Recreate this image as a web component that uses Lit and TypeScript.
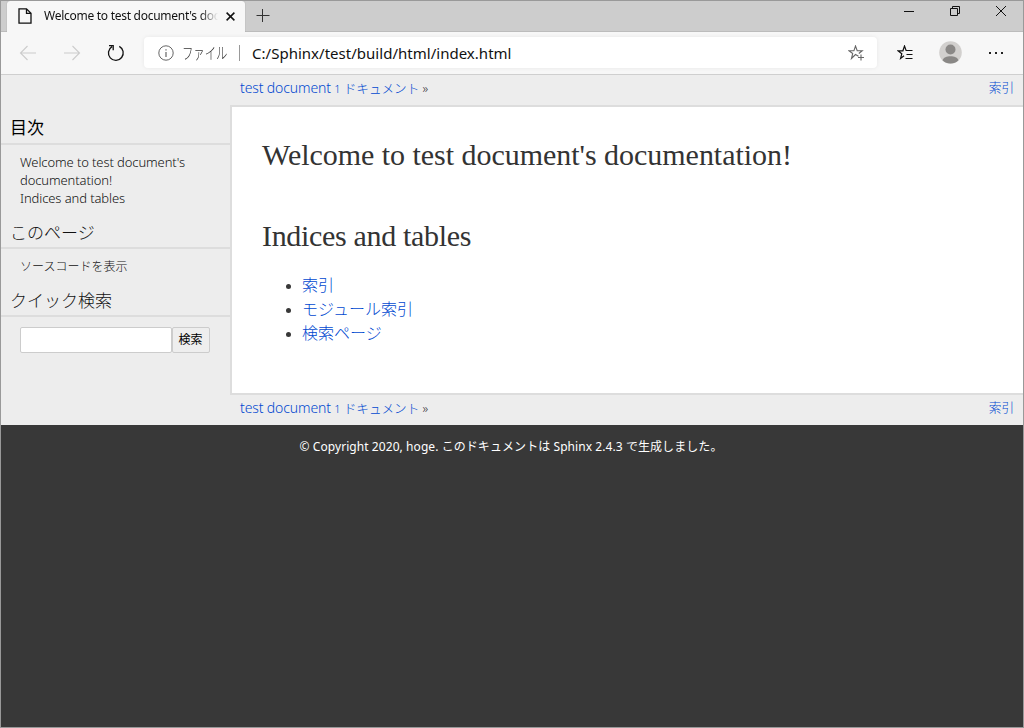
import { LitElement, html, css } from "lit";
import { customElement } from "lit/decorators.js";

@customElement("browser-chrome")
class BrowserChrome extends LitElement {
  static styles = css`
    :host { display: block; font-family: "Noto Sans", "Noto Sans CJK JP", sans-serif; font-weight: 400; }
    svg { display: block; fill: none; stroke: #111; flex: none; }
    .strip { display: flex; height: 30px; background: #cdcdcd; border-bottom: 1px solid #bcbcbc; padding-left: 6px; }
    .tab { display: flex; align-items: center; width: 238px; height: 31px; box-sizing: border-box; background: #f7f7f7; border-radius: 3px 3px 0 0; padding: 0 9px 1px 11px; box-shadow: 0 0 1px #888; clip-path: inset(-1px -2px 0 -2px); }
    .title { width: 174px; margin-left: 12px; overflow: hidden; white-space: nowrap; font-size: 12px; line-height: 18px; letter-spacing: -0.27px; color: #111; -webkit-mask-image: linear-gradient(90deg, #000 156px, transparent 174px); mask-image: linear-gradient(90deg, #000 156px, transparent 174px); }
    .close { margin-left: 8px; }
    .plus { margin: 8px 0 0 11px; }
    .controls { display: flex; margin-left: auto; gap: 35px; padding: 5px 16px 0 0; }
    .tools { display: flex; align-items: center; height: 43px; background: #f7f7f7; border-bottom: 1px solid #cfcfcf; box-sizing: border-box; padding: 0 19px 1px 18px; }
    .tools .fwd { margin-left: 26px; }
    .tools .reload { margin-left: 26px; }
    .field { display: flex; align-items: center; box-sizing: border-box; width: 733px; height: 31px; margin-left: 19px; background: #fff; border-radius: 4px; padding: 0 12px 0 14px; box-shadow: 0 0 4px #0001; white-space: nowrap; }
    .kind { width: 50px; margin-left: 8px; font-size: 16px; line-height: 22px; font-weight: 300; color: #333; }
    .kind span { display: inline-block; transform: scaleX(.71); transform-origin: 0 50%; }
    .bar { width: 1px; height: 16px; background: #999; margin-left: 7px; }
    .url { margin-left: 12px; font-size: 15px; line-height: 22px; letter-spacing: .02px; color: #111; }
    .star { margin-left: auto; }
    .fav { margin-left: 20px; }
    .user { margin-left: 24px; }
    .dots { margin-left: 27px; }
  `;
  render() {
    return html`
      <div class="strip">
        <div class="tab">
          <svg width="14" height="16" viewBox="0 0 14 16" stroke-width="1.3"><path d="M1 .8H8.5L13 5.3V15.2H1ZM8.5 .8V5.3H13" /></svg>
          <div class="title">Welcome to test document's documentation!</div>
          <svg class="close" width="9" height="9" viewBox="0 0 9 9" stroke-width="1.5"><path d="M.6 .6 8.4 8.4M8.4 .6 .6 8.4" /></svg>
        </div>
        <svg class="plus" width="14" height="14" viewBox="0 0 14 14"><path d="M.5 6.5H13.5M6.5 0V13" stroke="#333" /></svg>
        <div class="controls">
          <svg width="11" height="11" viewBox="0 0 11 11"><path d="M0 5.5H10" /></svg>
          <svg width="11" height="11" viewBox="0 0 11 11"><path d="M.5 2.5H7.5V9.5H.5ZM2.5 2.5V.5H9.5V7.5H7.5" /></svg>
          <svg width="11" height="11" viewBox="0 0 11 11"><path d="M0 0 10 10M10 0 0 10" /></svg>
        </div>
      </div>
      <div class="tools">
        <svg width="18" height="16" viewBox="0 0 18 16" stroke-width="1.1"><path d="M17 8H1.5M8.5 1 1.5 8l7 7" stroke="#ccc" /></svg>
        <svg class="fwd" width="18" height="16" viewBox="0 0 18 16" stroke-width="1.1"><path d="M1 8H16.500M9.500 1l7 7-7 7" stroke="#ccc" /></svg>
        <svg class="reload" width="18" height="18" viewBox="0 0 18 18" stroke-width="1.3"><path d="M12.300 2.400A7.400 7.400 0 1 1 5 2.600M2 1.700H6.200V6.200" /></svg>
        <div class="field">
          <svg width="16" height="16" viewBox="0 0 16 16"><g stroke="#666"><circle cx="8" cy="8" r="7.200" /><path d="M8 7V12M8 4.200V5.500" stroke-width="1.200" /></g></svg>
          <div class="kind"><span>ファイル</span></div>
          <div class="bar"></div>
          <div class="url">C:/Sphinx/test/build/html/index.html</div>
          <svg class="star" width="17" height="16" viewBox="0 0 17 16"><path d="M10.500 11.300 7.500 9.500 3.500 13.500 4.700 8.500 1 5.800H5.900L7.500 1 9.200 5.800H14.200L10.800 8.500M13 9.500V15.500M10 12.500H16" stroke="#666" stroke-width="1.100" /></svg>
        </div>
        <svg class="fav" width="18" height="16" viewBox="0 0 18 16" stroke-width="1.200"><path d="M7 10.700 3.600 13.400 4.800 8.700 1 5.800H5.900L7.500 1 9.100 5.500H15.500M9.500 9.500H15.500M8.500 13.500H15.500" /></svg>
        <svg class="user" width="23" height="23" viewBox="0 0 23 23" stroke="none"><circle cx="11.500" cy="11.500" r="11.300" fill="#d2d0ce" stroke="none" /><g fill="#8a8886" stroke="none"><circle cx="11.500" cy="8.500" r="5" /><path d="M3.500 19.300C5 13.800 18 13.800 19.500 19.300A11.300 11.300 0 0 1 3.500 19.300Z" /></g></svg>
        <svg class="dots" width="15" height="4" viewBox="0 0 15 4" stroke="none"><path d="M0 1H2V3H0ZM6 1H8V3H6ZM12 1H14V3H12Z" fill="#222" stroke="none" /></svg>
      </div>`;
  }
}

@customElement("app-root")
class AppRoot extends LitElement {
  static styles = css`
    :host { display: block; box-sizing: border-box; height: 728px; overflow: hidden; border: 1px solid #999; background: #383838; font-family: "Noto Sans", "Noto Sans CJK JP", sans-serif; font-weight: 300; color: #222; }
    .related { display: flex; justify-content: space-between; box-sizing: border-box; height: 30px; padding: 4px 9px 0 239px; background: #ededed; font-size: 12.6px; line-height: 18px; white-space: nowrap; }
    a { color: #0048d0; text-decoration: none; }
    .latin { font-size: 14px; letter-spacing: -.12px; }
    .num { font-size: 11px; }
    .main { display: flex; height: 290px; background: #ededed; }
    .side { width: 229px; flex: none; }
    h3 { margin: 0; box-sizing: border-box; border-bottom: 2px solid #ddd; padding: 2px 0 0 9px; font-size: 17px; font-weight: 300; line-height: 24px; height: 30px; color: #111; }
    h3.first { margin-top: 10px; color: #000; font-weight: 400; padding-top: 1px; }
    .toc { padding: 8px 0 0 19px; box-sizing: border-box; height: 74px; font-size: 13px; line-height: 18px; white-space: nowrap; letter-spacing: -.1px; color: #111; }
    .source { height: 38px; box-sizing: border-box; padding: 9px 0 0 19px; font-size: 12px; line-height: 18px; color: #111; }
    .search { display: flex; padding: 10px 0 0 19px; }
    input { box-sizing: border-box; width: 152px; height: 26px; border: 1px solid #ccc; border-radius: 2px; margin: 0; background: #fff; }
    button { box-sizing: border-box; width: 38px; height: 26px; border: 1px solid #ccc; border-radius: 2px; margin: 0; padding: 0 1px 3px 0; background: #eee; font: 400 12px "Noto Sans CJK JP", sans-serif; color: #000; }
    .body { flex: 1; box-sizing: border-box; border: 2px solid #ddd; border-right: 0; background: #fff; padding: 28px 30px; }
    h1 { margin: 0; font: 400 30px/40px "Liberation Serif", serif; white-space: nowrap; letter-spacing: -.03px; color: #333; }
    h1 + h1 { margin-top: 41px; letter-spacing: -.32px; }
    ul { list-style: none; margin: 17px 0 0; padding: 0 0 0 24px; font-size: 16px; line-height: 24px; }
    li { display: flex; align-items: center; height: 24px; }
    li::before { content: ""; width: 5px; height: 5px; margin: 2px 11px 0 0; border-radius: 50%; background: #383838; }
    footer { padding: 13px 2px 0 0; text-align: center; color: #fff; font-size: 12px; line-height: 18px; font-weight: 400; white-space: nowrap; letter-spacing: .07px; }
  `;
  related() {
    return html`<div class="related">
      <div><a href="#"><span class="latin">test document</span> <span class="num">1</span> ドキュメント</a> »</div>
      <a href="#">索引</a>
    </div>`;
  }
  render() {
    return html`
      <browser-chrome></browser-chrome>
      ${this.related()}
      <div class="main">
        <div class="side">
          <h3 class="first">目次</h3>
          <div class="toc">Welcome to test document's<br />documentation!<br />Indices and tables</div>
          <h3>このページ</h3>
          <div class="source">ソースコードを表示</div>
          <h3>クイック検索</h3>
          <div class="search"><input type="text" /><button>検索</button></div>
        </div>
        <div class="body">
          <h1>Welcome to test document's documentation!</h1>
          <h1>Indices and tables</h1>
          <ul>
            <li><a href="#">索引</a></li>
            <li><a href="#">モジュール索引</a></li>
            <li><a href="#">検索ページ</a></li>
          </ul>
        </div>
      </div>
      ${this.related()}
      <footer>© Copyright 2020, hoge. このドキュメントは Sphinx 2.4.3 で生成しました。</footer>`;
  }
}
